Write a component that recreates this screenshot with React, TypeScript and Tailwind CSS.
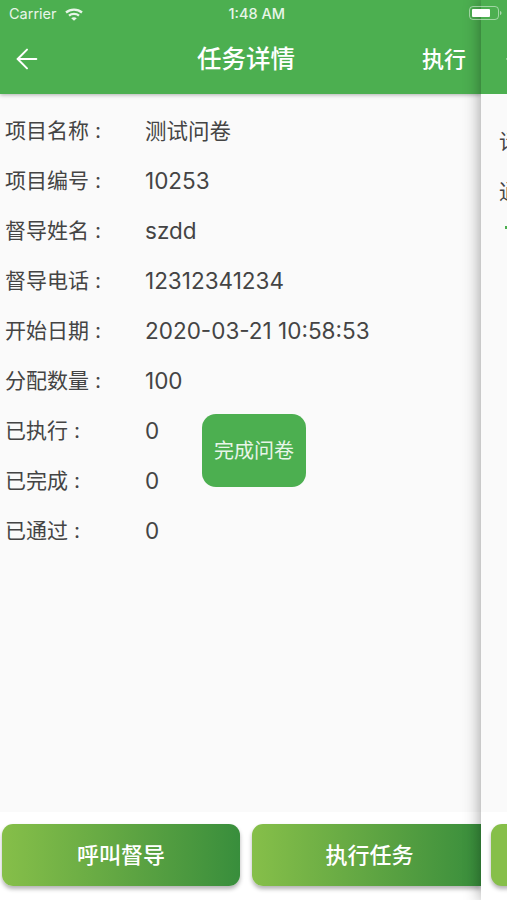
import { ArrowLeft } from "lucide-react";

const rows = [
  { label: "项目名称", value: "测试问卷" },
  { label: "项目编号", value: "10253" },
  { label: "督导姓名", value: "szdd" },
  { label: "督导电话", value: "12312341234" },
  { label: "开始日期", value: "2020-03-21 10:58:53" },
  { label: "分配数量", value: "100" },
  { label: "已执行", value: "0" },
  { label: "已完成", value: "0" },
  { label: "已通过", value: "0" },
];

const font = "font-['Inter','Noto_Sans_CJK_SC',sans-serif]";
const green = "bg-gradient-to-r from-[#86bf49] to-[#388e3c] shadow-[0_3px_4px_rgba(0,0,0,0.3)]";

const WifiIcon = () => (
  <svg width="18" height="13" viewBox="0 0 18 13" fill="none" stroke="#e8f5e9" strokeWidth="2.3">
    <path d="M1 4.5C5.5 0.7 12.5 0.7 17 4.5" />
    <path d="M4 7.6C6.8 5.3 11.2 5.3 14 7.6" />
    <path d="M9 12.8L6.2 10.2C7.9 8.8 10.1 8.8 11.8 10.2Z" fill="#e8f5e9" stroke="none" />
  </svg>
);

const BatteryIcon = () => (
  <svg width="33" height="14" viewBox="0 0 33 14" fill="none">
    <rect x="0.5" y="0.5" width="29" height="13" rx="3.5" stroke="#e8f5e9" strokeOpacity="0.55" />
    <rect x="3" y="3" width="18" height="8" rx="1" fill="#ffffff" />
    <path d="M31 5V9C32 8.6 32.5 7.8 32.5 7C32.5 6.2 32 5.4 31 5Z" fill="#e8f5e9" fillOpacity="0.6" />
  </svg>
);

export default function App() {
  return (
    <div className={`${font} relative flex h-[900px] w-[507px] overflow-hidden bg-white`}>
      <div className="relative flex h-full w-[481px] shrink-0 flex-col bg-[#fafafa]">
        <header className="h-[94px] shrink-0 bg-[#4caf50] shadow-[0_1px_4px_rgba(0,0,0,0.3)] text-white">
          <div className="flex h-7 items-center pl-[9px] text-[14.5px] text-[#e8f5e9]">
            <span>Carrier</span>
            <span className="ml-2"><WifiIcon /></span>
            <span className="ml-[146px] whitespace-nowrap font-medium">1:48 AM</span>
          </div>
          <div className="flex h-[62px] items-center pl-[11px] pr-[15px]">
            <ArrowLeft size={32} strokeWidth={1.5} />
            <span className="ml-[154px] text-[24.5px] font-medium">任务详情</span>
            <span className="ml-auto text-[22px] font-medium">执行</span>
          </div>
        </header>

        <main className="flex-1 pt-3 pl-[5px]">
          {rows.map((row, i) => (
            <div key={row.label} className="flex h-[50px] items-center text-[#444444]">
              <span className="w-[140px] shrink-0 text-[21px]">
                {row.label}
                <span className="ml-1.5">:</span>
              </span>
              <span className={i === 0 ? "text-[21.5px]" : "text-[22.5px]"}>{row.value}</span>
            </div>
          ))}
        </main>

        <footer className="flex h-[88px] shrink-0 gap-3 bg-white pt-[12px] pl-[2px]">
          <div className={`flex h-[62px] w-[238px] items-center justify-center rounded-[11px] text-[22px] font-medium text-white ${green}`}>
            呼叫督导
          </div>
          <div className={`flex h-[62px] flex-1 items-center justify-center rounded-l-[11px] pl-[6px] text-[22px] font-medium text-white ${green}`}>
            执行任务
          </div>
        </footer>

        <div className="absolute left-[202px] top-[414px] flex h-[73px] w-[104px] items-center justify-center rounded-[14px] bg-[#4caf50] text-[20px] text-[#e8f5e9]">
          完成问卷
        </div>
      </div>

      <div className="relative z-10 flex h-full flex-1 flex-col bg-[#fafafa] shadow-[0_0_16px_rgba(0,0,0,0.4)]">
        <div className="h-[94px] shrink-0 bg-[#4caf50] pt-7 pl-5 text-white">
          <div className="flex h-[62px] items-center">
            <ArrowLeft size={32} strokeWidth={1.5} className="shrink-0" />
          </div>
        </div>
        <div className="flex-1 overflow-hidden whitespace-nowrap pt-[23px] pl-[18px] text-[21px] leading-[50px] text-[#444444]">
          <div>请</div>
          <div>通</div>
          <div className="ml-[6px] mt-[9px] h-[3px] w-2 bg-[#4caf50]" />
        </div>
        <div className="h-[88px] shrink-0 bg-white pt-[12px] pl-[10px]">
          <div className="h-[62px] rounded-l-[11px] bg-[#86bf49] shadow-[0_3px_4px_rgba(0,0,0,0.3)]" />
        </div>
      </div>

      <div className="absolute left-[469px] top-[6px] z-20">
        <BatteryIcon />
      </div>
    </div>
  );
}
